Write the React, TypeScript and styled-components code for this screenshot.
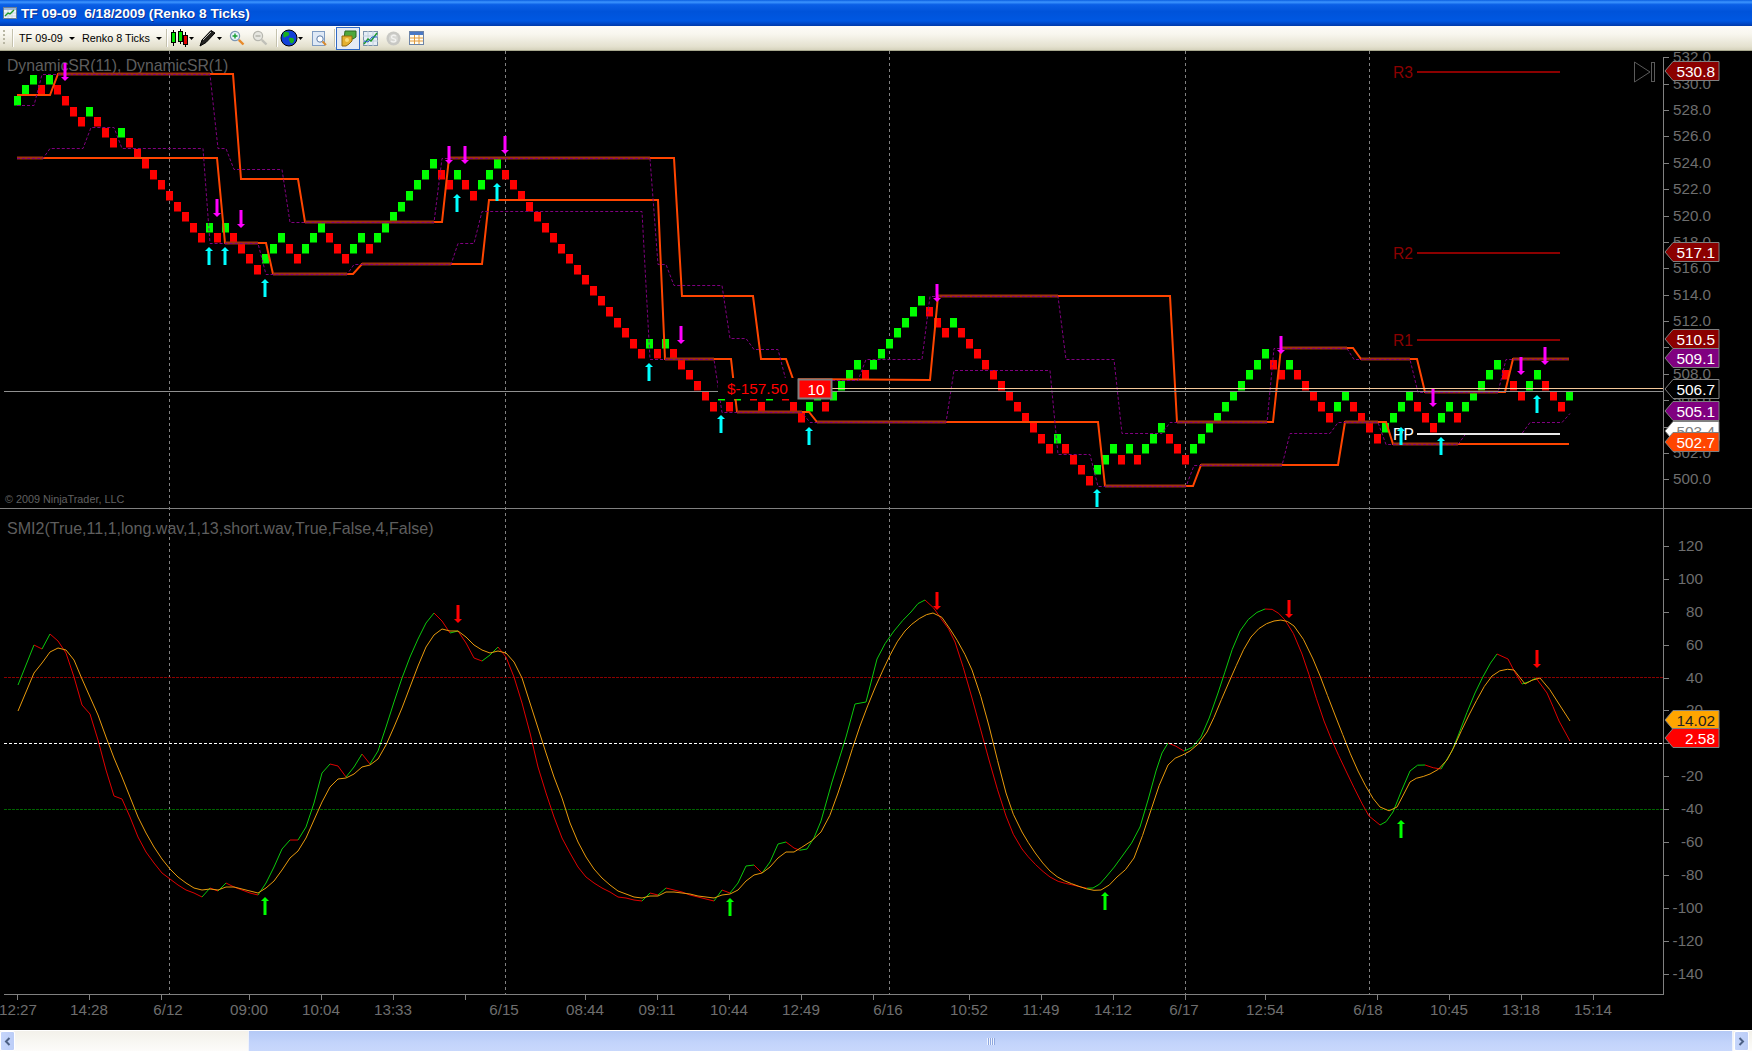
import React from "react";
import styled, { createGlobalStyle } from "styled-components";

const GlobalStyle = createGlobalStyle`
  html, body {
    margin: 0;
    padding: 0;
    background: #000;
    overflow: hidden;
  }
`;

const StyledWindow = styled.div`
  width: 1752px;
  height: 1051px;
  display: flex;
  flex-direction: column;
  font-family: "Liberation Sans", Arial, sans-serif;
`;

const StyledTitleBar = styled.div`
  height: 26px;
  display: flex;
  align-items: center;
  gap: 4px;
  padding-left: 3px;
  background: linear-gradient(
    180deg,
    #0a5ee0 0%,
    #3d95ff 8%,
    #0a5fe6 18%,
    #0053da 45%,
    #0058e2 80%,
    #0046c4 92%,
    #003aa8 100%
  );
  color: #fff;
  font-size: 13.7px;
  font-weight: 700;
  white-space: pre;
  text-shadow: 1px 1px #0f2f90;
`;

const StyledToolbar = styled.div`
  height: 25px;
  box-sizing: border-box;
  display: flex;
  align-items: center;
  padding-left: 3px;
  border-bottom: 1px solid #a8a88e;
  background: linear-gradient(180deg, #fdfcf8 0%, #f8f6ee 35%, #e4e1cf 85%, #d6d3bd 100%);
  font-size: 10.8px;
  color: #000;
`;

const StyledGripper = styled.div`
  width: 2px;
  height: 16px;
  margin-right: 7px;
  background: repeating-linear-gradient(180deg, #b9b7a4 0 2px, transparent 2px 4px);
`;

const StyledSeparator = styled.div<{ $before?: number }>`
  width: 2px;
  height: 18px;
  box-sizing: border-box;
  margin-left: ${(p) => p.$before ?? 0}px;
  border-right: 1px solid #fff;
  background: #c5c2ae;
`;

const StyledDropdown = styled.div<{ $width: number; $pad: number }>`
  width: ${(p) => p.$width}px;
  box-sizing: border-box;
  display: flex;
  align-items: center;
  gap: 6px;
  padding-left: ${(p) => p.$pad}px;
  white-space: nowrap;
`;

const StyledCaret = styled.span`
  width: 0;
  height: 0;
  border-left: 3px solid transparent;
  border-right: 3px solid transparent;
  border-top: 3px solid #000;
`;

const StyledTool = styled.div<{ $width: number; $active?: boolean }>`
  width: ${(p) => p.$width}px;
  height: 23px;
  box-sizing: border-box;
  display: flex;
  align-items: center;
  justify-content: center;
  border: 1px solid ${(p) => (p.$active ? "#316ac5" : "transparent")};
  background: ${(p) => (p.$active ? "#e6ebf3" : "transparent")};
`;

const StyledChart = styled.svg`
  display: block;
  flex: 1;
  width: 1752px;
  height: 979px;
  background: #000;
  font-family: "Liberation Sans", Arial, sans-serif;
`;

const AxisText = styled.text`
  font-size: 15.2px;
  fill: #6e6e6e;
`;

const PanelTitle = styled.text<{ $size: number }>`
  font-size: ${(p) => p.$size}px;
  fill: #5e5e5e;
`;

const CopyrightText = styled.text`
  font-size: 10.8px;
  fill: #606060;
`;

const PivotText = styled.text<{ $color: string }>`
  font-size: 15.6px;
  fill: ${(p) => p.$color};
`;

const TagText = styled.text<{ $color: string }>`
  font-size: 15.4px;
  fill: ${(p) => p.$color};
`;

const StyledScrollBar = styled.div`
  height: 21px;
  display: flex;
  gap: 1px;
  background: linear-gradient(180deg, #f3f1ea 0%, #fdfcfa 100%);
  border-top: 1px solid #fff;
  box-sizing: border-box;
`;

const StyledScrollButton = styled.div`
  width: 15px;
  display: flex;
  align-items: center;
  justify-content: center;
  border-radius: 2px;
  border: 1px solid #fff;
  box-sizing: border-box;
  background: linear-gradient(90deg, #c6d6fb 0%, #bccdf7 100%);
`;

const StyledScrollTrack = styled.div`
  width: 231px;
`;

const StyledScrollThumb = styled.div`
  width: 1485px;
  display: flex;
  align-items: center;
  justify-content: center;
  border-left: 1px solid #eef2fc;
  border-right: 1px solid #eef2fc;
  box-sizing: border-box;
  background: linear-gradient(180deg, #b4c9f6 0%, #c3d4fb 60%, #c8d8fc 100%);
`;

const StyledScrollGrip = styled.div`
  width: 8px;
  height: 7px;
  background: repeating-linear-gradient(90deg, #eef3fe 0 1px, #8fa8e0 1px 2px);
`;

const StyledRightEnd = styled.div`
  width: 2px;
`;

// renko walk, one run per direction: + is up, - is down
const WALK = [
  2, -1, 1, -4, 1, -3, 1, -10, 1, -1, 1, -4, 3, -2, 3, -3, 2, -1, 8, -2, 1, -2, 3, -18, 1, -1, 1, -6,
  1, -1, 2, -2, 2, -3, 2, -1, 4, -1, 7, -3, 1, -12, 1, -4, 3, -1, 1, -1, 3, -3, 10, -2, 1, -5, 2, -4,
  4, -3, 2, -1, 5, -3, 2, -3, 1,
];

const buildBricks = () => {
  const bricks = [{ x: 14, y: 96, up: true }];
  let col = 0;
  let row = 0;
  WALK.forEach((run) => {
    for (let i = 0; i < Math.abs(run); i++) {
      col += 1;
      row += run > 0 ? -1 : 1;
      bricks.push({ x: 14 + col * 8, y: Math.round(96 + row * 10.55), up: run > 0 });
    }
  });
  return bricks;
};

const HIGH_LINE =
  "17,95 50,95 58,74 233,74 241,179 298,179 305,222 442,222 449,158 674,158 682,296 753,296 761,359 786,359 793,379 930,380 938,296 1170,296 1177,422 1273,422 1281,348 1353,348 1361,359 1417,359 1425,392 1505,392 1513,359 1569,359";
const LOW_LINE =
  "17,158 217,158 225,243 266,243 273,274 353,274 362,264 482,264 489,200 658,200 665,359 731,359 737,412 809,412 817,422 1098,422 1105,486 1193,486 1201,465 1338,465 1345,422 1386,422 1393,444 1569,444";
const HIGH_DASH =
  "17,105 34,105 42,74 210,74 218,148 226,148 234,169 282,169 290,222 434,222 442,158 650,158 658,264 666,264 674,285 722,285 730,338 746,338 754,349 778,349 786,380 858,380 866,359 922,359 930,296 1058,296 1066,359 1114,359 1122,433 1162,433 1170,422 1267,422 1274,348 1347,348 1354,359 1410,359 1418,392 1498,392 1506,359 1569,359";
const LOW_DASH =
  "17,158 43,158 50,148 83,148 91,127 114,127 122,148 203,148 210,243 258,243 266,274 347,274 354,264 451,264 458,243 474,243 482,211 642,211 650,359 714,359 722,412 802,412 810,422 946,422 954,370 1050,370 1058,454 1090,454 1098,486 1186,486 1194,465 1282,465 1290,433 1330,433 1338,422 1378,422 1386,444 1458,444 1466,433 1522,433 1530,422 1562,422 1570,413";

// stretches where the dashed line runs on top of the solid one: [x1, x2, y]
const SHARED_SPANS = [
  [58, 210, 74], [305, 434, 222], [449, 650, 158], [938, 1058, 296], [1177, 1267, 422], [1281, 1347, 348],
  [1361, 1410, 359], [1425, 1498, 392], [1513, 1569, 359], [17, 43, 158], [225, 258, 243], [273, 347, 274],
  [362, 451, 264], [665, 714, 359], [737, 802, 412], [817, 946, 422], [1105, 1186, 486], [1201, 1282, 465],
  [1345, 1378, 422], [1393, 1458, 444],
];

const FAST_Y = [
  685, 665, 645, 649, 634, 641, 653, 677, 705, 714, 740, 770, 796, 799, 817, 837, 852, 863, 873, 879,
  885, 890, 893, 897, 888, 891, 883, 887, 890, 893, 895, 883, 867, 849, 840, 840, 827, 803, 773, 764,
  766, 777, 767, 754, 764, 751, 727, 702, 678, 657, 639, 623, 613, 621, 633, 631, 643, 658, 661, 655,
  647, 657, 677, 703, 733, 767, 793, 817, 838, 853, 867, 877, 883, 888, 892, 897, 898, 900, 901, 893,
  895, 888, 890, 892, 895, 897, 899, 901, 890, 893, 883, 866, 865, 873, 862, 844, 842, 848,
];
const SLOW_Y = [
  711, 692, 673, 663, 652, 648, 650, 660, 679, 697, 715, 737, 758, 777, 797, 817, 833, 847, 859, 869,
  877, 883, 888, 890, 889, 890, 887, 887, 889, 891, 893, 888, 881, 870, 858, 851, 838, 820, 802, 787,
  779, 778, 774, 767, 765, 759, 745, 727, 708, 687, 666, 647, 635, 629, 631, 631, 637, 645, 650, 653,
  651, 653, 662, 678, 703, 728, 753, 777, 798, 823, 842, 857, 869, 878, 885, 891, 894, 897, 898, 896,
  896, 892, 892, 893, 894, 896, 897, 898, 895, 894, 890, 881, 875, 873, 867, 858, 852, 852,
];
const FAST_TAIL: number[][] = [
  [807, 849], [821, 821], [832, 782], [846, 737], [855, 704], [866, 702], [877, 659], [894, 631],
  [911, 612], [925, 600], [942, 620], [955, 642], [972, 698], [989, 760], [1006, 816], [1022, 849],
  [1050, 877], [1073, 885], [1093, 888], [1106, 877], [1123, 855], [1140, 827], [1156, 771],
  [1168, 743], [1184, 751], [1201, 737], [1218, 693], [1240, 631], [1265, 609], [1285, 620],
  [1302, 654], [1324, 721], [1346, 771], [1369, 816], [1380, 825], [1393, 812], [1410, 771],
  [1425, 765], [1441, 769], [1452, 751], [1475, 693], [1497, 654], [1508, 659], [1522, 684],
  [1536, 678], [1547, 693], [1559, 721], [1570, 741],
];
const SLOW_TAIL: number[][] = [
  [821, 832], [838, 793], [860, 726], [883, 670], [905, 631], [933, 613], [950, 629], [972, 670],
  [989, 726], [1006, 793], [1022, 832], [1050, 871], [1078, 886], [1101, 890], [1117, 877],
  [1134, 858], [1151, 810], [1168, 765], [1190, 751], [1207, 732], [1229, 682], [1251, 637],
  [1274, 621], [1294, 626], [1313, 659], [1335, 715], [1358, 771], [1380, 807], [1397, 807],
  [1410, 782], [1430, 774], [1447, 760], [1469, 715], [1492, 676], [1514, 670], [1525, 684],
  [1540, 678], [1559, 704], [1570, 721],
];

// catmull-rom through the hand-read points, one step per bar
const smooth = (pts: number[][]) => {
  const out: number[][] = [];
  for (let i = 0; i < pts.length - 1; i++) {
    const p0 = pts[Math.max(i - 1, 0)];
    const p1 = pts[i];
    const p2 = pts[i + 1];
    const p3 = pts[Math.min(i + 2, pts.length - 1)];
    const steps = Math.max(1, Math.round((p2[0] - p1[0]) / 8));
    for (let s = 0; s < steps; s++) {
      const t = s / steps;
      const at = (k: number) =>
        0.5 *
        (2 * p1[k] +
          (p2[k] - p0[k]) * t +
          (2 * p0[k] - 5 * p1[k] + 4 * p2[k] - p3[k]) * t * t +
          (3 * p1[k] - p0[k] - 3 * p2[k] + p3[k]) * t * t * t);
      out.push([at(0), at(1)]);
    }
  }
  out.push(pts[pts.length - 1]);
  return out;
};

const withTail = (ys: number[], tail: number[][]) => {
  const head = ys.map((y, i) => [18 + i * 8, y]);
  return [...head, ...smooth([head[head.length - 1], ...tail]).slice(1)];
};

const CYAN_UP = [
  [209, 247], [225, 247], [265, 279], [457, 194], [497, 183], [649, 363], [721, 415], [809, 427],
  [1097, 489], [1401, 427], [1441, 437], [1537, 395],
];
const MAGENTA_DOWN = [
  [65, 63], [217, 199], [241, 210], [449, 146], [465, 146], [505, 136], [681, 326], [937, 284],
  [1281, 336], [1433, 389], [1521, 357], [1545, 347],
];
const GREEN_UP = [[265, 897], [730, 898], [1105, 892], [1401, 820]];
const RED_DOWN = [[458, 605], [937, 592], [1289, 600], [1537, 650]];

const GRID_X = [169, 505, 889, 1185, 1369];
const PRICE_LABELS = [532, 530, 528, 526, 524, 522, 520, 518, 516, 514, 512, 510, 508, 506, 504, 502, 500];
const SMI_LABELS = [120, 100, 80, 60, 40, 20, 0, -20, -40, -60, -80, -100, -120, -140];
const TIME_TICKS = [17, 89, 161, 249, 321, 393, 465, 585, 657, 729, 801, 873, 969, 1041, 1113, 1185, 1265, 1377, 1449, 1521, 1593];
const TIME_LABELS: [string, number][] = [
  ["12:27", 18], ["14:28", 89], ["6/12", 168], ["09:00", 249], ["10:04", 321], ["13:33", 393],
  ["6/15", 504], ["08:44", 585], ["09:11", 657], ["10:44", 729], ["12:49", 801], ["6/16", 888],
  ["10:52", 969], ["11:49", 1041], ["14:12", 1113], ["6/17", 1184], ["12:54", 1265], ["6/18", 1368],
  ["10:45", 1449], ["13:18", 1521], ["15:14", 1593],
];
const PIVOTS: [string, number, string][] = [
  ["R3", 72, "#8b0000"],
  ["R2", 253, "#8b0000"],
  ["R1", 340, "#8b0000"],
  ["PP", 434, "#ffffff"],
];
const TAGS: [string, number, string, string][] = [
  ["530.8", 71, "#8b0000", "#fff"],
  ["517.1", 252, "#8b0000", "#fff"],
  ["510.5", 339, "#8b0000", "#fff"],
  ["509.1", 358, "#800080", "#fff"],
  ["506.7", 389, "#000000", "#fff"],
  ["505.1", 411, "#800080", "#fff"],
  ["503.4", 431, "#ffffff", "#808080"],
  ["502.7", 442, "#ff4500", "#fff"],
  ["14.02", 720, "#ffa500", "#222"],
  ["2.58", 738, "#ff0000", "#fff"],
];

const Arrow = ({ x, y, up, color }: { x: number; y: number; up: boolean; color: string }) =>
  up ? (
    <path d={`M${x},${y} l4,4 h-2.5 v14 h-3 v-14 h-2.5 z`} fill={color} />
  ) : (
    <path d={`M${x},${y + 18} l4,-4 h-2.5 v-14 h-3 v14 h-2.5 z`} fill={color} />
  );

const PriceTag = ({ value, y, fill, color }: { value: string; y: number; fill: string; color: string }) => (
  <g>
    <polygon
      points={`1665,${y} 1673,${y - 9.5} 1719,${y - 9.5} 1719,${y + 9.5} 1673,${y + 9.5}`}
      fill={fill}
      stroke="#808080"
      strokeWidth="1"
    />
    <TagText x="1715" y={y + 5.5} textAnchor="end" $color={color}>
      {value}
    </TagText>
  </g>
);

const TwoToneLine = ({ points }: { points: number[][] }) => (
  <g strokeWidth="1">
    {points.slice(1).map((p, i) => (
      <line
        key={i}
        x1={points[i][0]}
        y1={points[i][1]}
        x2={p[0]}
        y2={p[1]}
        stroke={p[1] < points[i][1] ? "#0cc80c" : "#e00000"}
      />
    ))}
  </g>
);

const ChartPanels = () => {
  const bricks = buildBricks();
  const slow = withTail(SLOW_Y, SLOW_TAIL)
    .map((p) => p.join(","))
    .join(" ");
  return (
    <StyledChart viewBox="0 51 1752 979">
      {/* grid and separators */}
      {GRID_X.map((x) => (
        <line key={x} x1={x + 0.5} y1="51" x2={x + 0.5} y2="994" stroke="#808080" strokeDasharray="3 3" />
      ))}
      <line x1="0" y1="508.5" x2="1752" y2="508.5" stroke="#808080" />

      <PanelTitle x="7" y="71" $size={15.75}>DynamicSR(11), DynamicSR(1)</PanelTitle>
      <PanelTitle x="7" y="534" $size={16.05}>SMI2(True,11,1,long.wav,1,13,short.wav,True,False,4,False)</PanelTitle>
      <CopyrightText x="5" y="503">© 2009 NinjaTrader, LLC</CopyrightText>

      {/* renko bricks */}
      {bricks.map((b, i) => (
        <rect key={i} x={b.x} y={b.y} width="7" height="9.5" fill={b.up ? "#00ff00" : "#ff0000"} />
      ))}

      {/* dynamic support and resistance */}
      <polyline points={HIGH_LINE} fill="none" stroke="#ff4500" strokeWidth="2" />
      <polyline points={LOW_LINE} fill="none" stroke="#ff4500" strokeWidth="2" />
      {SHARED_SPANS.map(([x1, x2, y]) => (
        <line key={`${x1}-${y}`} x1={x1} y1={y} x2={x2} y2={y} stroke="#a0300f" strokeWidth="3" />
      ))}
      <g transform="translate(0 0.5)">
        <polyline points={HIGH_DASH} fill="none" stroke="#800080" strokeDasharray="3 2" />
        <polyline points={LOW_DASH} fill="none" stroke="#800080" strokeDasharray="3 2" />
      </g>

      {PIVOTS.map(([name, y, color]) => (
        <g key={name}>
          <PivotText x="1393" y={y + 6} $color={color}>{name}</PivotText>
          <line
            x1="1417"
            y1={y}
            x2="1560"
            y2={y}
            stroke={name === "PP" ? "#e8e8e8" : "#8b0000"}
            strokeWidth="2"
          />
        </g>
      ))}

      {/* last price and position lines */}
      <line x1="4" y1="391.5" x2="1663" y2="391.5" stroke="#909090" />
      <line x1="832" y1="388.5" x2="1663" y2="388.5" stroke="#f4c89a" />

      {CYAN_UP.map(([x, y]) => (
        <Arrow key={x} x={x} y={y} up color="#00ffff" />
      ))}
      {MAGENTA_DOWN.map(([x, y]) => (
        <Arrow key={x} x={x} y={y} up={false} color="#ff00ff" />
      ))}

      {/* open position label */}
      <rect x="718" y="378" width="80" height="21" fill="#000" />
      <TagText x="727" y="394" $color="#ff0000">$-157.50</TagText>
      <rect x="798.5" y="379.5" width="33" height="19" fill="#ff0000" stroke="#808080" strokeWidth="2" />
      <TagText x="816" y="395" textAnchor="middle" $color="#fff">10</TagText>

      {/* go to last bar button */}
      <polygon points="1634.5,62 1650,72 1634.5,82" fill="none" stroke="#5a5a5a" />
      <rect x="1651.5" y="62.5" width="3" height="19" fill="none" stroke="#5a5a5a" />

      {/* stochastic momentum levels */}
      <line x1="4" y1="677.5" x2="1663" y2="677.5" stroke="#8b0000" strokeDasharray="3 1" />
      <line x1="4" y1="809.5" x2="1663" y2="809.5" stroke="#006400" strokeDasharray="3 1" />
      <TwoToneLine points={withTail(FAST_Y, FAST_TAIL)} />
      <polyline points={slow} fill="none" stroke="#e99a0c" />
      <line x1="4" y1="743.5" x2="1663" y2="743.5" stroke="#fff" strokeDasharray="3 2" />

      {GREEN_UP.map(([x, y]) => (
        <Arrow key={x} x={x} y={y} up color="#00ff00" />
      ))}
      {RED_DOWN.map(([x, y]) => (
        <Arrow key={x} x={x} y={y} up={false} color="#ff0000" />
      ))}

      {/* axes */}
      <line x1="1663.5" y1="57" x2="1663.5" y2="994" stroke="#808080" />
      <line x1="4" y1="994.5" x2="1664" y2="994.5" stroke="#808080" />
      {PRICE_LABELS.map((v) => {
        const y = Math.round(110 + (528 - v) * 13.19);
        return (
          <g key={v}>
            <line x1="1663" y1={y + 0.5} x2="1669" y2={y + 0.5} stroke="#808080" />
            <AxisText x="1711" y={y + 4.5} textAnchor="end">{v.toFixed(1)}</AxisText>
          </g>
        );
      })}
      {SMI_LABELS.map((v) => {
        const y = Math.round(743.3 - (v / 20) * 32.9);
        return (
          <g key={v}>
            <line x1="1663" y1={y + 0.5} x2="1669" y2={y + 0.5} stroke="#808080" />
            <AxisText x="1703" y={y + 4.5} textAnchor="end">{v}</AxisText>
          </g>
        );
      })}
      {TIME_TICKS.map((x) => (
        <line key={x} x1={x + 0.5} y1="994" x2={x + 0.5} y2="1000" stroke="#808080" />
      ))}
      {TIME_LABELS.map(([label, x]) => (
        <AxisText key={label} x={x} y="1015" textAnchor="middle">{label}</AxisText>
      ))}

      {TAGS.map(([value, y, fill, color]) => (
        <PriceTag key={value} value={value} y={y} fill={fill} color={color} />
      ))}
    </StyledChart>
  );
};

const ChartWindowIcon = () => (
  <svg width="14" height="14" viewBox="0 0 14 14">
    <rect x="0.5" y="1.5" width="13" height="11" fill="#eef3f8" stroke="#6b7f94" />
    <rect x="1" y="2" width="12" height="2" fill="#9db7d8" />
    <path d="M1,7h12M1,10h12M5,4v8M9,4v8" stroke="#c8d6e4" />
    <polyline points="2,10 5,7 7,8 11,4" fill="none" stroke="#1e9a2a" strokeWidth="1.4" />
  </svg>
);

const CandlesIcon = () => (
  <svg width="24" height="18" viewBox="0 0 24 18">
    <path d="M3.5,1v16M10.5,0v15M15.5,3v15" stroke="#000" />
    <rect x="1.5" y="3.5" width="4" height="10" fill="#00e000" stroke="#000" />
    <rect x="8.5" y="2.5" width="4" height="10" fill="#00e000" stroke="#000" />
    <rect x="13.5" y="6.5" width="4" height="9" fill="#e00000" stroke="#000" />
    <path d="M19,8h5l-2.5,3z" fill="#000" />
  </svg>
);

const PenIcon = () => (
  <svg width="24" height="18" viewBox="0 0 24 18">
    <path d="M1,17 L3,11 L12,1.5 L16,4 L7,13.5 Z" fill="#222" stroke="#000" />
    <path d="M4,11 L12,3" stroke="#bbb" />
    <path d="M18,8h5l-2.5,3z" fill="#000" />
  </svg>
);

const MagnifierIcon = ({ muted, plus }: { muted?: boolean; plus?: boolean }) => (
  <svg width="16" height="16" viewBox="0 0 16 16">
    <circle cx="6" cy="6" r="4.6" fill={muted ? "#e6e6e0" : "#e8f2fb"} stroke={muted ? "#b6b6ae" : "#7c97b4"} strokeWidth="1.2" />
    <path d="M9.8,9.8 L14.5,14.5" stroke={muted ? "#c0c0b8" : "#e88a2c"} strokeWidth="2.4" />
    {plus ? (
      <path d="M3.5,6h5M6,3.5v5" stroke="#16a030" strokeWidth="1.4" />
    ) : (
      <path d="M3.5,6h5" stroke="#b0b0a8" strokeWidth="1.4" />
    )}
  </svg>
);

const GlobeIcon = () => (
  <svg width="24" height="18" viewBox="0 0 24 18">
    <circle cx="9" cy="9" r="8" fill="#1140d8" stroke="#000" />
    <path d="M4,3 C7,2 10,3 9,6 C8,8 5,7 4,9 C3,7 3,5 4,3 Z M9,9 C12,8 15,9 14,12 C13,15 11,15 10,13 C9,12 9,10 9,9 Z" fill="#17b020" />
    <path d="M18,8h5l-2.5,3z" fill="#000" />
  </svg>
);

const ReportIcon = () => (
  <svg width="15" height="15" viewBox="0 0 15 15">
    <rect x="0.5" y="0.5" width="12" height="14" fill="#dfe9f6" stroke="#7f9cc2" />
    <circle cx="8" cy="8" r="3.2" fill="#fff" stroke="#5c7ca8" />
    <path d="M10.5,10.5 L14,14" stroke="#d68a30" strokeWidth="2" />
  </svg>
);

const MoneyIcon = () => (
  <svg width="17" height="17" viewBox="0 0 17 17">
    <path d="M5,1 h11 v6 l-3,2 h-9 z" fill="#4fa83c" stroke="#2c6a24" />
    <path d="M2,6 h10 v5 l-3,3 l-3,2 h-4 z" fill="#e4b030" stroke="#916a10" />
    <circle cx="7" cy="10" r="2" fill="#f8dc78" />
  </svg>
);

const LineChartIcon = () => (
  <svg width="15" height="15" viewBox="0 0 15 15">
    <rect x="0.5" y="0.5" width="14" height="14" fill="#e6eef6" stroke="#7c94ac" />
    <path d="M0,5h15M0,10h15M5,0v15M10,0v15" stroke="#c2d0de" />
    <polyline points="1,13 5,8 8,10 14,2" fill="none" stroke="#1c9a2c" strokeWidth="1.4" />
    <polyline points="1,10 5,11 9,6 14,6" fill="none" stroke="#2460c8" />
  </svg>
);

const CoinIcon = () => (
  <svg width="15" height="15" viewBox="0 0 15 15">
    <circle cx="7.5" cy="7.5" r="7" fill="#c8c8c4" />
    <circle cx="7.5" cy="7.5" r="4.5" fill="#d8d8d4" />
    <path d="M10,5 C8,3.5 5,4.5 5.5,6.5 C6,8 9.5,7 9.8,9 C10,11 6.5,11.5 5,10" fill="none" stroke="#f2f2f0" strokeWidth="1.3" />
  </svg>
);

const TableIcon = () => (
  <svg width="15" height="14" viewBox="0 0 15 14">
    <rect x="0.5" y="0.5" width="14" height="13" fill="#fffdf2" stroke="#6c84a8" />
    <rect x="1" y="1" width="13" height="3" fill="#4a78c4" />
    <path d="M1,7h13M1,10h13M5.5,4v9M10,4v9" stroke="#e29a3c" />
  </svg>
);

const Chevron = ({ left }: { left?: boolean }) => (
  <svg width="7" height="9" viewBox="0 0 7 9">
    <polyline
      points={left ? "5.5,1 2,4.5 5.5,8" : "1.5,1 5,4.5 1.5,8"}
      fill="none"
      stroke="#4d6185"
      strokeWidth="2"
    />
  </svg>
);

const Toolbar = () => (
  <StyledToolbar>
    <StyledGripper />
    <StyledSeparator />
    <StyledDropdown $width={64} $pad={5}>
      TF 09-09 <StyledCaret />
    </StyledDropdown>
    <StyledDropdown $width={88} $pad={4}>
      Renko 8 Ticks <StyledCaret />
    </StyledDropdown>
    <StyledSeparator />
    <StyledTool $width={28}><CandlesIcon /></StyledTool>
    <StyledTool $width={30}><PenIcon /></StyledTool>
    <StyledTool $width={22}><MagnifierIcon plus /></StyledTool>
    <StyledTool $width={24}><MagnifierIcon muted /></StyledTool>
    <StyledSeparator $before={4} />
    <StyledTool $width={28}><GlobeIcon /></StyledTool>
    <StyledTool $width={26}><ReportIcon /></StyledTool>
    <StyledSeparator $before={2} />
    <StyledTool $width={24} $active><MoneyIcon /></StyledTool>
    <StyledTool $width={21}><LineChartIcon /></StyledTool>
    <StyledTool $width={24}><CoinIcon /></StyledTool>
    <StyledTool $width={22}><TableIcon /></StyledTool>
  </StyledToolbar>
);

const ScrollBar = () => (
  <StyledScrollBar>
    <StyledScrollButton><Chevron left /></StyledScrollButton>
    <StyledScrollTrack />
    <StyledScrollThumb><StyledScrollGrip /></StyledScrollThumb>
    <StyledScrollButton><Chevron /></StyledScrollButton>
    <StyledRightEnd />
  </StyledScrollBar>
);

export default function App() {
  return (
    <StyledWindow>
      <GlobalStyle />
      <StyledTitleBar>
        <ChartWindowIcon />
        {"TF 09-09  6/18/2009 (Renko 8 Ticks)"}
      </StyledTitleBar>
      <Toolbar />
      <ChartPanels />
      <ScrollBar />
    </StyledWindow>
  );
}
